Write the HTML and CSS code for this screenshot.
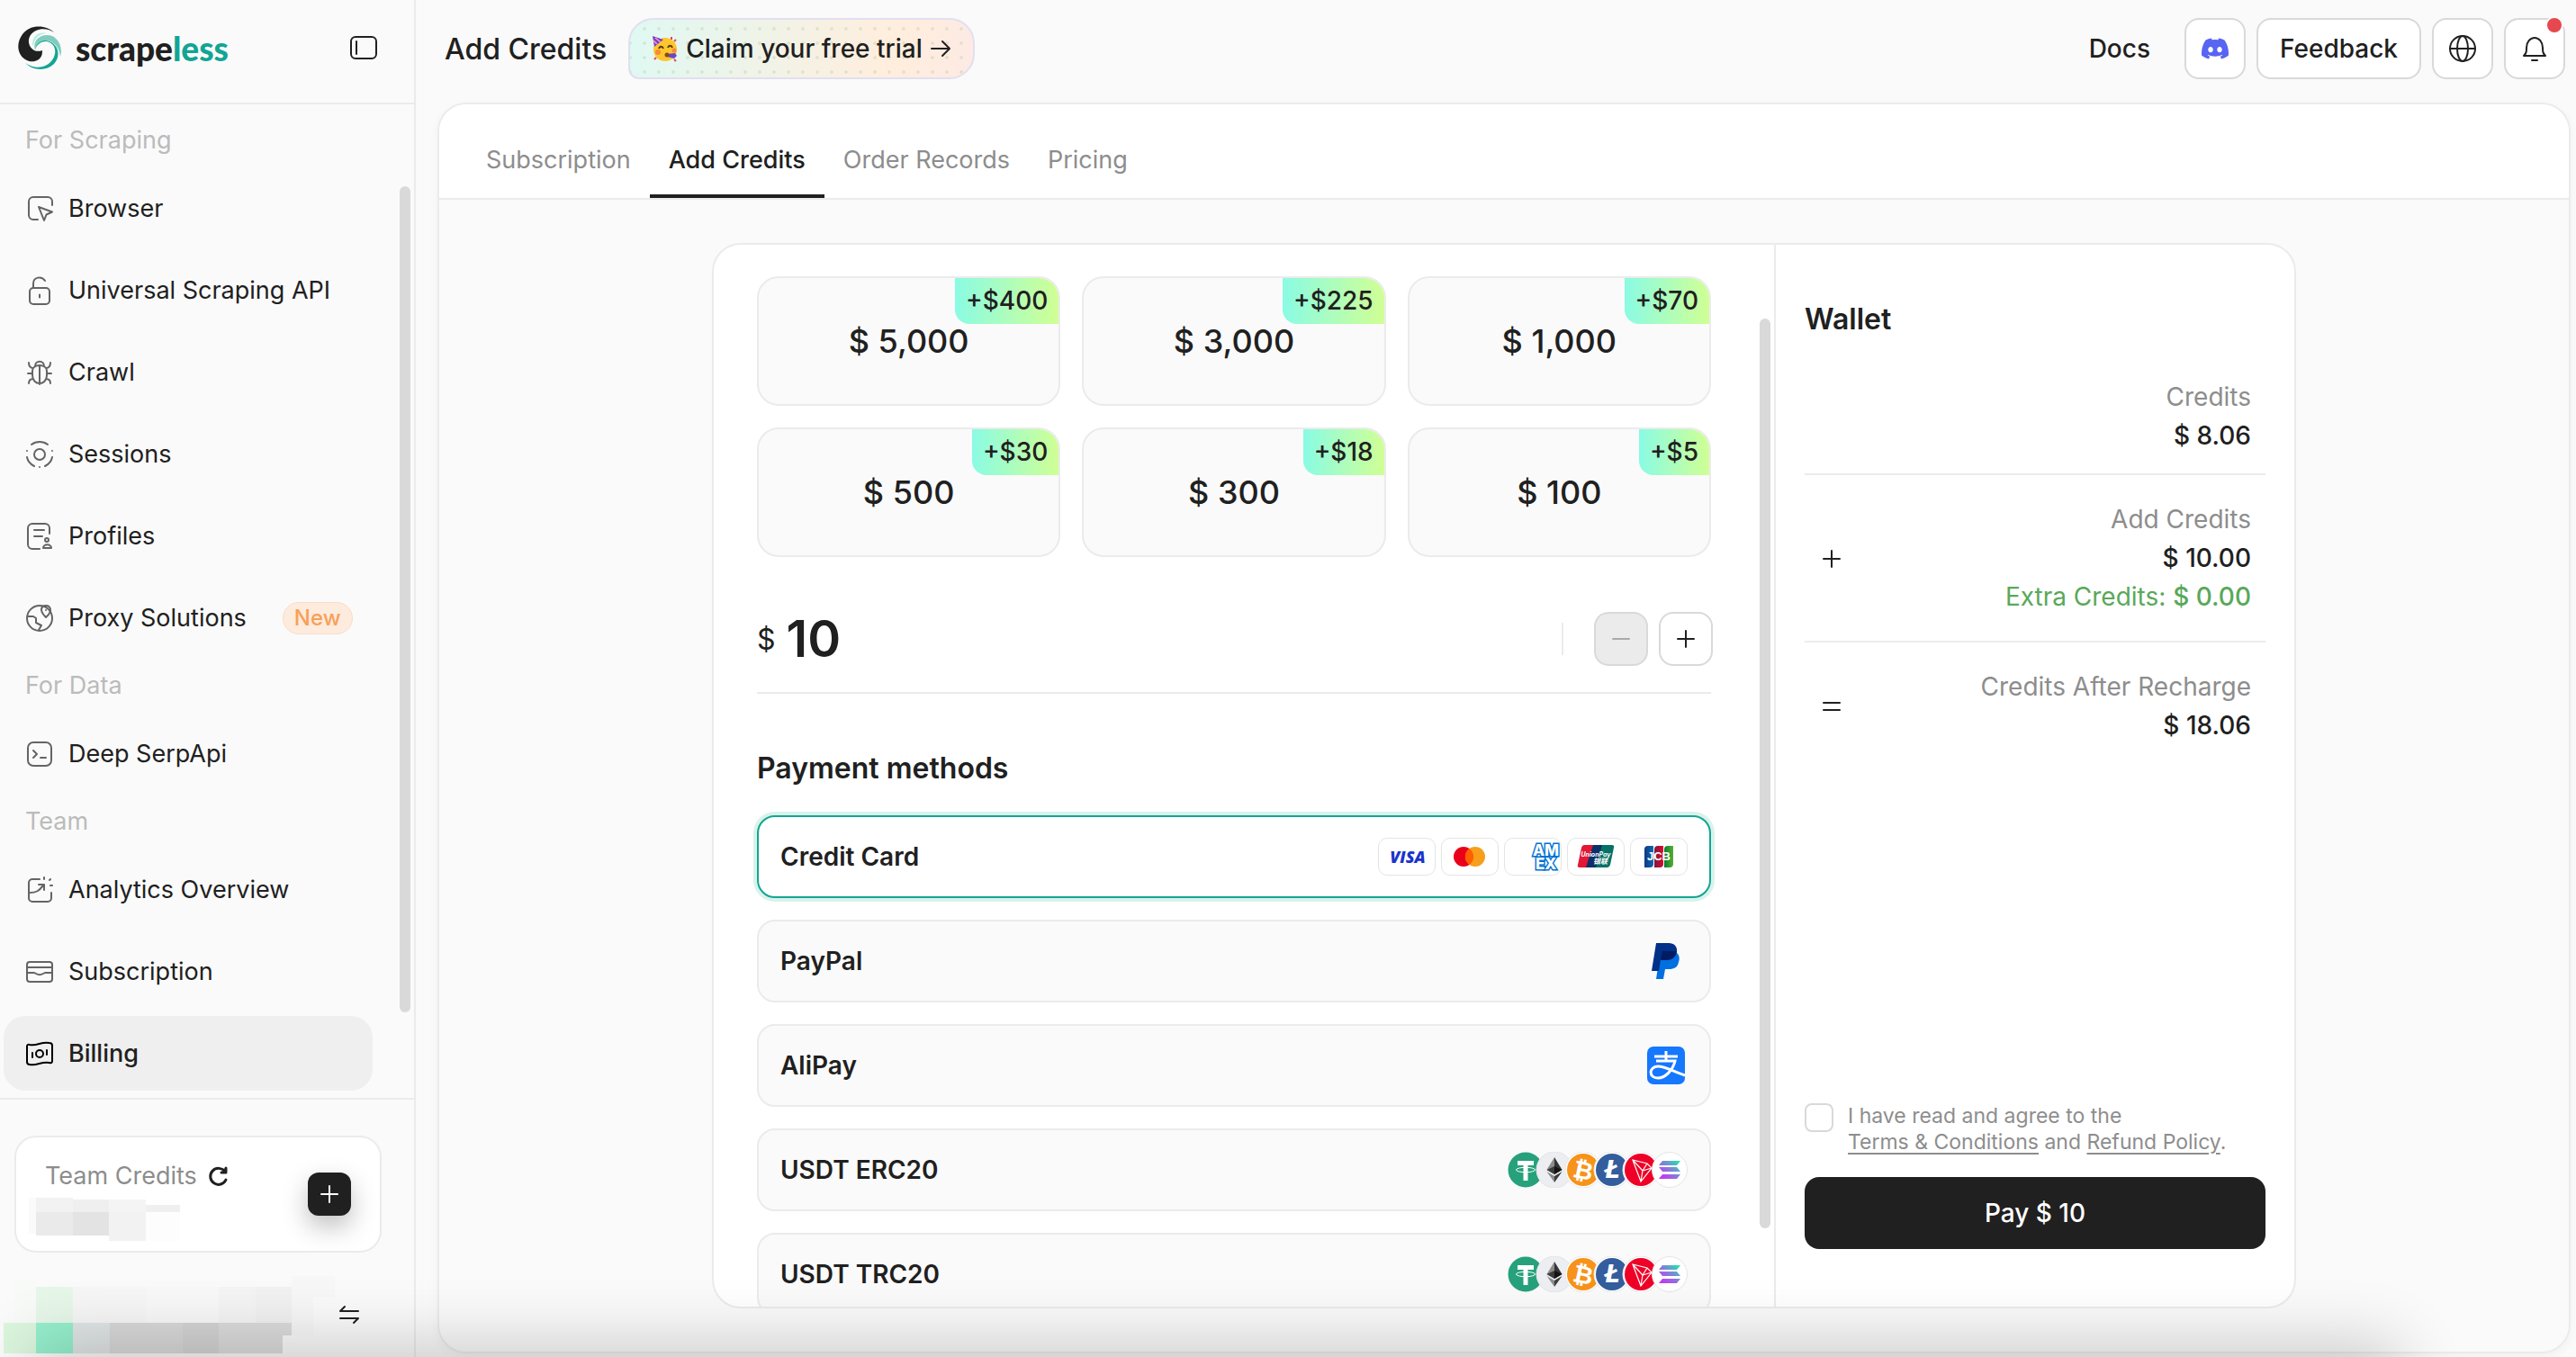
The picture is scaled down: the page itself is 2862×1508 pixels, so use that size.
FILE: index.html
```html
<!DOCTYPE html>
<html lang="en">
<head>
    <meta charset="UTF-8">
    <meta name="viewport" content="width=device-width, initial-scale=1.0">
    <title>Add Credits - Scrapeless</title>
    <link rel="stylesheet" href="styles.css">
</head>
<body>
    <!-- Shared symbols -->
    <svg class="defs" width="0" height="0" aria-hidden="true">
        <defs>
            <linearGradient id="sol" x1="0" y1="1" x2="1" y2="0">
                <stop offset="0" stop-color="#d328f5"/>
                <stop offset="0.5" stop-color="#8a78dc"/>
                <stop offset="1" stop-color="#14f1a8"/>
            </linearGradient>
            <linearGradient id="jcb-blue"><stop offset="0" stop-color="#12387f"/><stop offset="1" stop-color="#0b6ab5"/></linearGradient>
            <linearGradient id="jcb-red"><stop offset="0" stop-color="#7a1c3c"/><stop offset="1" stop-color="#e0062f"/></linearGradient>
            <linearGradient id="jcb-green"><stop offset="0" stop-color="#0a7b35"/><stop offset="1" stop-color="#55b230"/></linearGradient>
            <symbol id="plus" viewBox="0 0 24 24"><path d="M12 3v18M3 12h18"/></symbol>
            <symbol id="coins" viewBox="0 0 200 40">
                <circle cx="20" cy="20" r="19.5" fill="#26a17b"/>
                <path d="M11 10h18v5h-6.500v17h-5v-17H11z" fill="#fff"/>
                <ellipse cx="20" cy="20" rx="10.500" ry="2.700" fill="none" stroke="#fff" stroke-width="1"/>
                <circle cx="52" cy="20" r="20" fill="#edeef2" stroke="#e4e4e6"/>
                <path d="M52 6l-8.500 14 8.500 5z" fill="#8c8c8c"/><path d="M52 6l8.500 14-8.500 5z" fill="#343434"/>
                <path d="M52 16l-8.500 4 8.500 5z" fill="#3c3c3b"/><path d="M52 16l8.500 4-8.500 5z" fill="#141414"/>
                <path d="M43.500 22l8.500 12v-7z" fill="#8c8c8c"/><path d="M60.500 22L52 34v-7z" fill="#3c3c3b"/>
                <circle cx="84" cy="20" r="20" fill="#fff" stroke="#e8e8e8"/><circle cx="84" cy="20" r="18" fill="#f7931a"/>
                <text x="84" y="30" font-size="27" class="coin-text" transform="rotate(12 84 20)">₿</text>
                <circle cx="116" cy="20" r="20" fill="#fff" stroke="#e8e8e8"/><circle cx="116" cy="20" r="18" fill="#345d9d"/>
                <text x="116" y="29" font-size="26" font-style="italic" class="coin-text">Ł</text>
                <circle cx="148" cy="20" r="20" fill="#fff" stroke="#e8e8e8"/><circle cx="148" cy="20" r="18" fill="#ef0027"/>
                <path d="M139 9l16 4 5 5-12 15zM139 9l11 12-2 12M150 21l5-8M150 21l10-3" fill="none" stroke="#fff" stroke-width="1.200"/>
                <circle cx="180" cy="20" r="19.500" fill="#fff" stroke="#e4e4e4"/>
                <path d="M172 10h20l-4 5h-20zM168 17h20l4 5h-20zM172 25h20l-4 5h-20z" fill="url(#sol)"/>
            </symbol>
        </defs>
    </svg>

    <div class="app">
        <aside class="sidebar">
            <div class="sidebar-head">
                <a class="logo" href="#">
                    <svg width="48" height="48" viewBox="0 0 48 48" aria-hidden="true">
                        <path d="M40 7C32-1 14-3 5 9c-8 11-5 23 3 28 6 4 16 3 18.500-5 .5-2 .5-5 .5-5-4 1.500-8 1-10.500-1C9 20 11 9 20 5c7-3.500 15-1.500 20 2z" fill="#202020"/>
                        <path d="M16 21c0-10 7-15 15-13-7 1-13 5-14 14z" fill="#b5ecde"/>
                        <path d="M19 27C15 14 28 7 38 11c8 4 12 14 9 23-1-9-5-14-11-17-7-3-14 1-17 10z" fill="#80cdbf"/>
                        <path d="M8 41c10 7 22 6 29-2 6-7 6-17-2-21-5-2.500-11-.5-15 5 3-7 11-9 17-5 10 6 9 18 3 24-8 8-23 8-32-1z" fill="#12a594"/>
                    </svg>
                    <span class="logo-text">scrape<span>less</span></span>
                </a>
                <button class="icon-plain" aria-label="Collapse sidebar">
                    <svg class="ico" width="32" height="32" viewBox="0 0 32 32"><rect x="2" y="4" width="28" height="24" rx="5"/><path d="M8 9v14"/></svg>
                </button>
            </div>

            <nav class="menu">
                <h2>For Scraping</h2>
                <a href="#"><svg class="ico" viewBox="0 0 32 32"><path d="M30 12V8a5 5 0 0 0-5-5H9a5 5 0 0 0-5 5v15a5 5 0 0 0 5 5h5"/><path d="M15 14l15 5.500-6.500 3L21 29z"/></svg>Browser</a>
                <a href="#"><svg class="ico" viewBox="0 0 32 32"><rect x="5" y="13" width="22" height="18" rx="4"/><path d="M9 13V8c0-7 9-9 13-3M16 20.500v3"/></svg>Universal Scraping API</a>
                <a href="#"><svg class="ico" viewBox="0 0 32 32"><path d="M8 14c0-8 16-8 16 0v5c0 12-16 12-16 0zM16 9v20M11 9c0-7 10-7 10 0M4 5c0 4 2 6 5 6M28 5c0 4-2 6-5 6M3 17h5M24 17h5M4 28c0-4 2-5 5-5M28 28c0-4-2-5-5-5"/></svg>Crawl</a>
                <a href="#"><svg class="ico" viewBox="0 0 32 32"><circle cx="16" cy="16" r="6"/><path d="M7 5c5-4 13-4 18 0M2 19c1 5 4 8 8 10M30 19c-1 5-4 8-8 10M2 12v.1M30 12v.1M16 30v.1"/></svg>Sessions</a>
                <a href="#"><svg class="ico" viewBox="0 0 32 32"><path d="M27 13V7a5 5 0 0 0-5-5H8a5 5 0 0 0-5 5v18a5 5 0 0 0 5 5h8M10 9h11M10 16h9"/><circle cx="24" cy="20" r="2"/><path d="M20 29c0-5 9-5 9 0z"/></svg>Profiles</a>
                <a href="#"><svg class="ico" viewBox="0 0 32 32"><circle cx="16" cy="16" r="14"/><path d="M23 15c-9-9-4-13 0-13s9 5 0 13zM23 7v.1M3 14h6l3 2v5l6 3-3 5"/></svg>Proxy Solutions<span class="tag">New</span></a>
                <h2>For Data</h2>
                <a href="#"><svg class="ico" viewBox="0 0 32 32"><rect x="3" y="3" width="26" height="26" rx="6"/><path d="M9 12l4 4-4 4M17 20h6"/></svg>Deep SerpApi</a>
                <h2>Team</h2>
                <a href="#"><svg class="ico" viewBox="0 0 32 32"><path d="M16 4H8a4 4 0 0 0-4 4v17a4 4 0 0 0 4 4h17a4 4 0 0 0 4-4v-6M4 19c9 0 11-2 16-8M15 10h6v6M21 2v2M28 4l-1 1M30 11h-2"/></svg>Analytics Overview</a>
                <a href="#"><svg class="ico" viewBox="0 0 32 32"><rect x="2" y="5" width="28" height="22" rx="3"/><path d="M2 11h28M2 17h8c5 3 7 3 12 0h8"/></svg>Subscription</a>
                <a href="#" class="active"><svg class="ico" viewBox="0 0 32 32"><path d="M2 8q0-3 3-2c8 2 13-4 22-2q3 0 3 3v17q0 3-3 2c-9-2-14 4-22 2q-3 0-3-3z"/><circle cx="16" cy="16" r="4"/><path d="M8 15v5M24 12v5"/></svg>Billing</a>
            </nav>
            <div class="scroll-thumb menu-thumb"></div>

            <div class="sidebar-foot">
                <div class="credits-card">
                    <div class="credits-info">
                        <p class="credits-title">Team Credits
                            <button class="icon-plain" aria-label="Refresh"><svg class="ico" width="24" height="24" viewBox="0 0 24 24"><path d="M20 16a9 9 0 1 1-1-9M20 3v5h-5M18 5v2"/></svg></button>
                        </p>
                        <svg class="masked" width="168" height="48" viewBox="0 0 168 48" aria-hidden="true">
                            <path d="M0 0h8v40H0z" fill="#fafafa"/><path d="M8 0h41v16H8z" fill="#f2f2f2"/><path d="M49 2h40v14H49z" fill="#efefef"/><path d="M89 2h41v14H89z" fill="#f4f4f4"/><path d="M130 8h38v8h-38z" fill="#efefef"/>
                            <path d="M8 16h41v26H8z" fill="#eaeaea"/><path d="M49 16h40v26H49z" fill="#e3e3e3"/><path d="M89 16h41v32H89z" fill="#f2f2f2"/><path d="M130 16h38v32h-38z" fill="#fdfdfd"/>
                        </svg>
                    </div>
                    <button class="add-btn" aria-label="Add credits"><svg class="ico" width="24" height="24"><use href="#plus"/></svg></button>
                </div>
                <div class="account">
                    <svg width="368" height="86" viewBox="0 0 368 86" aria-hidden="true">
                        <path d="M12 4h24v48H12z" fill="#f7faf7"/><path d="M36 12h41v40H36z" fill="#e6f7ea"/><path d="M77 12h81v40H77z" fill="#f6f6f6"/><path d="M158 12h81v40h-81z" fill="#f8f8f8"/><path d="M239 12h41v40h-41z" fill="#f4f4f4"/><path d="M280 12h40v40h-40z" fill="#f1f1f1"/><path d="M320 0h48v24h-24v42h-24z" fill="#f7f7f7"/>
                        <path d="M0 52h36v34H0z" fill="#dcf6de"/><path d="M36 52h41v34H36z" fill="#96f0cd"/><path d="M77 52h41v34H77z" fill="#e0e5e5"/><path d="M118 52h81v34h-81z" fill="#d9d9d9"/><path d="M199 52h40v34h-40z" fill="#d4d4d4"/><path d="M239 52h81v14h-10v20h-71z" fill="#dcdcdc"/>
                    </svg>
                    <button class="icon-plain switch" aria-label="Switch account"><svg class="ico" width="24" height="24" viewBox="0 0 24 24"><path d="M22 8H2l5-5M2 16h20l-5 5"/></svg></button>
                </div>
            </div>
        </aside>

        <main class="main">
            <header class="topbar">
                <h1>Add Credits</h1>
                <a class="trial" href="#">
                    <svg width="30" height="30" viewBox="0 0 30 30" aria-hidden="true">
                        <circle cx="15" cy="16" r="13" fill="#fdc62f"/>
                        <path d="M1 1l12 4-10 8z" fill="#7b3fc4"/><path d="M4 3l6 5M2 6l4 4" stroke="#f59fd0" stroke-width="1.500"/>
                        <path d="M8 15c1-3 4-3 5 0M18 14c1-3 4-3 5 0" fill="none" stroke="#5d3a12" stroke-width="2"/>
                        <circle cx="7" cy="19" r="3" fill="#f68a3a"/><circle cx="25" cy="17" r="2.500" fill="#f68a3a"/>
                        <path d="M17 21l9-1 2 3-3 3-8-2z" fill="#6a45c9"/><circle cx="17" cy="22" r="2.500" fill="#8a4b14"/>
                        <path d="M22 2v3M27 5l-2 2M3 27l2-2M27 29l-2-2" stroke="#e8474e" stroke-width="2"/>
                    </svg>
                    <span>Claim your free trial</span>
                    <svg class="ico" width="24" height="24" viewBox="0 0 24 24"><path d="M2 12h20M14 4l8 8-8 8"/></svg>
                </a>
                <div class="actions">
                    <a class="docs" href="#">Docs</a>
                    <button class="square" aria-label="Discord">
                        <svg width="30" height="30" viewBox="0 0 24 24" fill="#5865f2"><path d="M20.317 4.370a19.800 19.800 0 0 0-4.885-1.515.074.074 0 0 0-.079.037c-.21.375-.444.864-.608 1.250a18.270 18.270 0 0 0-5.487 0 12.640 12.640 0 0 0-.617-1.250.077.077 0 0 0-.079-.037A19.740 19.740 0 0 0 3.677 4.370a.07.07 0 0 0-.032.027C.533 9.046-.32 13.580.099 18.057a.082.082 0 0 0 .031.057 19.900 19.900 0 0 0 5.993 3.030.078.078 0 0 0 .084-.028c.462-.63.874-1.295 1.226-1.994a.076.076 0 0 0-.041-.106 13.100 13.100 0 0 1-1.872-.892.077.077 0 0 1-.008-.128c.126-.094.252-.192.372-.292a.074.074 0 0 1 .077-.010c3.928 1.793 8.180 1.793 12.062 0a.074.074 0 0 1 .078.010c.12.098.246.198.373.292a.077.077 0 0 1-.006.127 12.300 12.300 0 0 1-1.873.892.077.077 0 0 0-.041.107c.36.698.772 1.362 1.225 1.993a.076.076 0 0 0 .084.028 19.840 19.840 0 0 0 6.002-3.030.077.077 0 0 0 .032-.054c.5-5.177-.838-9.674-3.549-13.660a.061.061 0 0 0-.031-.030zM8.020 15.330c-1.183 0-2.157-1.085-2.157-2.419s.956-2.419 2.157-2.419c1.210 0 2.176 1.096 2.157 2.420 0 1.333-.956 2.418-2.157 2.418zm7.975 0c-1.183 0-2.157-1.085-2.157-2.419s.955-2.419 2.157-2.419c1.210 0 2.176 1.096 2.157 2.420 0 1.333-.946 2.418-2.157 2.418z"/></svg>
                    </button>
                    <button class="feedback">Feedback</button>
                    <button class="square" aria-label="Language">
                        <svg class="ico" width="32" height="32" viewBox="0 0 32 32"><circle cx="16" cy="16" r="14"/><path d="M2 16h28"/><ellipse cx="16" cy="16" rx="6" ry="14"/></svg>
                    </button>
                    <button class="square" aria-label="Notifications">
                        <svg class="ico" width="32" height="32" viewBox="0 0 32 32"><path d="M4 24c3-3 3-5 3-9a9 11 0 0 1 18 0c0 4 0 6 3 9zM13 29h6"/></svg>
                        <span class="dot"></span>
                    </button>
                </div>
            </header>

            <section class="panel">
                <nav class="tabs">
                    <a href="#">Subscription</a>
                    <a href="#" class="active">Add Credits</a>
                    <a href="#">Order Records</a>
                    <a href="#">Pricing</a>
                </nav>

                <div class="panel-body">
                    <div class="checkout">
                        <div class="form">
                            <div class="amounts">
                                <button>$ 5,000<span class="bonus">+$400</span></button>
                                <button>$ 3,000<span class="bonus">+$225</span></button>
                                <button>$ 1,000<span class="bonus">+$70</span></button>
                                <button>$ 500<span class="bonus">+$30</span></button>
                                <button>$ 300<span class="bonus">+$18</span></button>
                                <button>$ 100<span class="bonus">+$5</span></button>
                            </div>

                            <div class="custom">
                                <label for="amount">$</label>
                                <input id="amount" type="text" value="10">
                                <span class="sep"></span>
                                <button class="step" disabled aria-label="Decrease"><svg class="ico" width="24" height="24" viewBox="0 0 24 24"><path d="M3 12h18"/></svg></button>
                                <button class="step" aria-label="Increase"><svg class="ico" width="24" height="24"><use href="#plus"/></svg></button>
                            </div>

                            <h2>Payment methods</h2>
                            <div class="methods">
                                <label class="method selected">
                                    <input type="radio" name="method" checked>
                                    <span>Credit Card</span>
                                    <span class="cards">
                                        <svg viewBox="0 0 62 40"><text x="32" y="27" font-size="18" class="brand visa">VISA</text></svg>
                                        <svg viewBox="0 0 62 40"><circle cx="24" cy="20" r="11" fill="#eb001b"/><circle cx="37" cy="20" r="11" fill="#f79e1b"/><path d="M30.500 11a11 11 0 0 1 0 18 11 11 0 0 1 0-18z" fill="#ff5f00"/></svg>
                                        <svg viewBox="0 0 62 40"><text font-size="17" class="amex"><tspan x="31" y="19">AM</tspan><tspan x="34" y="34">EX</tspan></text></svg>
                                        <svg viewBox="0 0 62 40"><path d="M18 7h12l-6 25H13q-3 0-2-3l4-19q1-3 3-3z" fill="#e21836"/><path d="M28 7h11l-6 25H20z" fill="#0b3168"/><path d="M38 7h11q3 0 2 3l-4 19q-1 3-3 3H31z" fill="#067267"/><text class="brand union"><tspan x="31" y="20" font-size="7">UnionPay</tspan><tspan x="36" y="28" font-size="8">银联</tspan></text></svg>
                                        <svg viewBox="0 0 62 40"><path d="M19 8h6v20q0 4-4 4h-6V12q0-4 4-4z" fill="url(#jcb-blue)"/><path d="M30 8h6v20q0 4-4 4h-6V12q0-4 4-4z" fill="url(#jcb-red)"/><path d="M41 8h6v20q0 4-4 4h-6V12q0-4 4-4z" fill="url(#jcb-green)"/><text x="31" y="24" font-size="13" class="brand jcb">JCB</text></svg>
                                    </span>
                                </label>
                                <label class="method">
                                    <input type="radio" name="method">
                                    <span>PayPal</span>
                                    <svg width="48" height="48" viewBox="0 0 48 48" aria-hidden="true">
                                        <path d="M34 13c4 3 6 7 4 12-1 6-5 8-11 8h-4l-2 11h-8l3-20z" fill="#0070e0"/>
                                        <path d="M13 4h14c6 0 10 4 9 10-1 6-6 9-12 9h-6l-2 12H8z" fill="#003087"/>
                                        <path d="M20 13h15.500c0 6-5 10-11.500 10h-6z" fill="#001c64"/>
                                    </svg>
                                </label>
                                <label class="method">
                                    <input type="radio" name="method">
                                    <span>AliPay</span>
                                    <svg width="48" height="48" viewBox="0 0 48 48" aria-hidden="true">
                                        <rect x="3" y="3" width="42" height="42" rx="7" fill="#1677ff"/>
                                        <path d="M24 8v11M11 14h26M13 19h21c-2 9-10 19-19 19-11 0-10-13 0-13 8 0 18 6 30 10" fill="none" stroke="#fff" stroke-width="3"/>
                                    </svg>
                                </label>
                                <label class="method">
                                    <input type="radio" name="method">
                                    <span>USDT ERC20</span>
                                    <svg width="200" height="40" aria-hidden="true"><use href="#coins"/></svg>
                                </label>
                                <label class="method">
                                    <input type="radio" name="method">
                                    <span>USDT TRC20</span>
                                    <svg width="200" height="40" aria-hidden="true"><use href="#coins"/></svg>
                                </label>
                            </div>
                        </div>

                        <div class="wallet">
                            <div class="scroll-thumb form-thumb"></div>
                            <h2>Wallet</h2>
                            <div class="sum">
                                <div><p>Credits</p><strong>$ 8.06</strong></div>
                            </div>
                            <div class="sum">
                                <svg class="ico" width="24" height="24"><use href="#plus"/></svg>
                                <div><p>Add Credits</p><strong>$ 10.00</strong><p class="extra">Extra Credits: <b>$ 0.00</b></p></div>
                            </div>
                            <div class="sum">
                                <svg class="ico" width="24" height="24" viewBox="0 0 24 24"><path d="M3 8h18M3 16h18"/></svg>
                                <div><p>Credits After Recharge</p><strong>$ 18.06</strong></div>
                            </div>
                            <div class="agree">
                                <input type="checkbox" id="agree">
                                <label for="agree">I have read and agree to the<br><a href="#">Terms &amp; Conditions</a> and <a href="#">Refund Policy</a>.</label>
                            </div>
                            <button class="pay">Pay $ 10</button>
                        </div>
                    </div>
                </div>
            </section>
        </main>
    </div>
    <div class="bottom-shade"></div>
</body>
</html>
```
FILE: styles.css
```css
* { box-sizing: border-box; margin: 0; padding: 0; }
body { font-family: Inter, "Noto Sans CJK SC", sans-serif; font-size: 27px; line-height: 43px; color: #202020; background: #fafafa; overflow: hidden; }
button, input { font: inherit; color: inherit; background: none; border: none; }
button { cursor: pointer; }
a { color: inherit; text-decoration: none; }
svg { display: block; flex: none; }
.defs { position: absolute; }
.ico { fill: none; stroke: currentColor; stroke-width: 2; stroke-linecap: round; stroke-linejoin: round; }
.icon-plain { display: inline-flex; }
.app { display: flex; height: 100vh; }

/* Sidebar */
.sidebar { position: relative; width: 462px; flex: none; display: flex; flex-direction: column; border-right: 2px solid #ebebeb; }
.sidebar-head { height: 116px; flex: none; display: flex; align-items: center; justify-content: space-between; padding: 0 40px 8px 20px; border-bottom: 2px solid #ebebeb; }
.logo { display: flex; align-items: center; gap: 16px; }
.logo-text { font-family: Lato, sans-serif; font-weight: 900; font-size: 37px; }
.logo-text span { color: #12a594; }
.menu { flex: 1; min-height: 0; overflow: hidden; padding-top: 10px; }
.menu h2 { height: 60px; padding-left: 28px; font-size: 27px; line-height: 60px; font-weight: 400; color: #bbb; }
.menu a { display: flex; align-items: center; gap: 16px; height: 83px; margin: 0 46px 8px 4px; padding-left: 24px; border-radius: 24px; }
.menu h2 + a { margin-top: 4px; }
.menu h2:not(:first-child) { margin-top: -4px; }
.menu .ico { width: 32px; height: 32px; color: #646464; }
.menu .active { background: #efefef; font-weight: 500; }
.menu .active .ico { color: #000; }
.tag { margin-left: 24px; padding: 0 12px; border: 1px solid #fcdcc4; border-radius: 18px; background: #fdebde; color: #f9a056; font-size: 24px; line-height: 34px; font-weight: 500; }
.scroll-thumb { position: absolute; width: 12px; border-radius: 6px; background: #d9d9d9; }
.menu-thumb { top: 207px; right: 4px; bottom: 383px; }
.sidebar-foot { flex: none; height: 288px; padding-top: 40px; border-top: 2px solid #ebebeb; }
.credits-card { display: flex; justify-content: space-between; align-items: center; height: 130px; margin: 0 36px 26px 16px; padding: 0 32px 0 14px; border: 2px solid #ebebeb; border-radius: 24px; background: #fff; }
.credits-info { padding-top: 8px; }
.credits-title { display: flex; align-items: center; gap: 12px; padding-left: 18px; color: #8d8d8d; line-height: 48px; }
.credits-title button { color: #202020; }
.credits-title .ico { stroke-width: 3; }
.add-btn { display: flex; align-items: center; justify-content: center; width: 48px; height: 48px; border-radius: 12px; background: #202020; color: #fff; box-shadow: 0 12px 28px rgba(0, 0, 0, 0.25); }
.account { display: flex; align-items: center; margin-left: 4px; }
.switch { margin-left: 4px; }

/* Top bar */
.main { flex: 1; min-width: 0; display: flex; flex-direction: column; }
.topbar { flex: none; display: flex; align-items: center; height: 114px; padding: 0 12px 6px 32px; font-size: 28px; font-weight: 500; }
.topbar h1 { font-size: 32px; font-weight: 500; }
.trial { display: flex; align-items: center; gap: 8px; height: 68px; margin-left: 24px; padding: 0 24px; border: 2px solid #e2dff0; border-radius: 28px 28px 28px 12px; background: radial-gradient(circle, rgba(160, 190, 140, 0.25) 2px, transparent 2px) 8px 2px / 16px 16px, linear-gradient(100deg, #dff9f3, #f3f2e6 45%, #ffeedd 75%, #fdeae4); }
.actions { display: flex; align-items: center; gap: 12px; margin-left: auto; }
.docs { margin-right: 26px; }
.square, .feedback { position: relative; display: flex; align-items: center; justify-content: center; height: 68px; border: 2px solid #d9d9d9; border-radius: 16px; background: #fff; }
.square { width: 68px; }
.feedback { padding: 0 24px; font-weight: 500; }
.dot { position: absolute; top: -4px; right: 0; width: 20px; height: 20px; border: 2px solid #fafafa; border-radius: 50%; background: #e5484d; }

/* Panel */
.panel { flex: 1; min-height: 0; display: flex; flex-direction: column; margin: 0 6px 4px 24px; border: 2px solid #ebebeb; border-radius: 32px; box-shadow: 0 4px 12px rgba(0, 0, 0, 0.04); overflow: hidden; }
.tabs { flex: none; display: flex; align-items: flex-end; height: 106px; padding-left: 31px; background: #fff; border-bottom: 2px solid #ebebeb; }
.tabs a { height: 84px; padding: 0 21px; line-height: 84px; color: #8d8d8d; }
.tabs .active { color: #202020; font-weight: 500; border-bottom: 4px solid #202020; }
.panel-body { flex: 1; min-height: 0; display: flex; justify-content: center; padding: 48px; }
.checkout { flex: 1; max-width: 1760px; display: flex; border: 2px solid #ebebeb; border-radius: 32px; background: #fff; overflow: hidden; }

/* Form */
.form { flex: 1; min-width: 0; overflow: hidden; padding: 35px 70px 0 48px; }
.amounts { display: grid; grid-template-columns: repeat(3, 1fr); gap: 24px; }
.amounts button { position: relative; height: 144px; border: 2px solid #ebebeb; border-radius: 24px; background: #fafafa; font-size: 36px; font-weight: 500; overflow: hidden; }
.bonus { position: absolute; top: 0; right: 0; padding: 0 12px; border-bottom-left-radius: 16px; background: linear-gradient(90deg, #8afbe4, #d0ff94); font-size: 28px; line-height: 51px; }
.custom { display: flex; align-items: center; gap: 12px; height: 120px; margin-top: 32px; border-bottom: 2px solid #ebebeb; }
.custom label { font-size: 32px; }
.custom input { flex: 1; min-width: 0; height: 68px; font-size: 56px; font-weight: 600; line-height: 68px; }
.sep { width: 2px; height: 36px; margin-right: 22px; background: #ebebeb; }
.step { display: flex; align-items: center; justify-content: center; width: 60px; height: 60px; border: 2px solid #d9d9d9; border-radius: 16px; }
.step:last-child { margin-right: -2px; }
.step:disabled { background: #ebebeb; color: #aaa; }
.form h2, .wallet h2 { font-size: 32px; font-weight: 600; }
.form h2 { margin: 61px 0 31px; }
.methods { display: flex; flex-direction: column; gap: 24px; }
.method { display: flex; align-items: center; justify-content: space-between; height: 92px; padding: 0 24px; border: 2px solid #ebebeb; border-radius: 20px; background: #fafafa; font-size: 28px; font-weight: 600; }
.method input { position: absolute; opacity: 0; }
.selected { border-color: #12a594; background: #fff; box-shadow: 0 0 0 4px #d8f3ea; }
.cards { display: flex; gap: 6px; }
.cards svg { width: 64px; height: 42px; border: 1px solid #e4e4e4; border-radius: 10px; overflow: hidden; }
.brand { font-weight: 700; font-style: italic; text-anchor: middle; fill: #fff; }
.visa { font-family: "Open Sans", sans-serif; font-weight: 800; fill: #1a34cc; }
.amex { font-weight: 800; fill: #fff; stroke: #0070d2; stroke-width: 3px; paint-order: stroke; }
.jcb { font-family: "Liberation Sans", sans-serif; font-style: normal; }
.coin-text { font-family: "DejaVu Sans", sans-serif; font-weight: 700; text-anchor: middle; fill: #fff; }

/* Wallet */
.wallet { position: relative; width: 578px; flex: none; display: flex; flex-direction: column; padding: 61px 32px 64px; border-left: 2px solid #ebebeb; }
.form-thumb { top: 82px; left: -18px; bottom: 87px; }
.wallet h2 { margin-bottom: 16px; }
.sum { display: flex; align-items: center; padding: 28px 16px 27px; font-size: 28px; }
.sum + .sum { border-top: 2px solid #ebebeb; }
.wallet h2 + .sum { padding-bottom: 20px; }
.sum .ico { margin-left: 2px; }
.sum div { margin-left: auto; text-align: right; }
.sum p { color: #8d8d8d; }
.sum strong { display: block; font-weight: 500; }
.sum .extra { color: #5aa85a; }
.extra b { font-weight: 500; }
.agree { display: flex; gap: 16px; margin-top: auto; margin-bottom: 24px; color: #8d8d8d; font-size: 23px; line-height: 29px; }
.agree input { appearance: none; flex: none; width: 32px; height: 32px; border: 2px solid #d9d9d9; border-radius: 8px; }
.agree a { text-decoration: underline; text-underline-offset: 4px; }
.pay { height: 80px; border-radius: 16px; background: #202020; color: #fff; font-size: 28px; font-weight: 500; }

.bottom-shade { position: fixed; left: 60px; right: 220px; bottom: -40px; height: 30px; box-shadow: 0 0 72px 24px rgba(0, 0, 0, 0.2); pointer-events: none; }
```
